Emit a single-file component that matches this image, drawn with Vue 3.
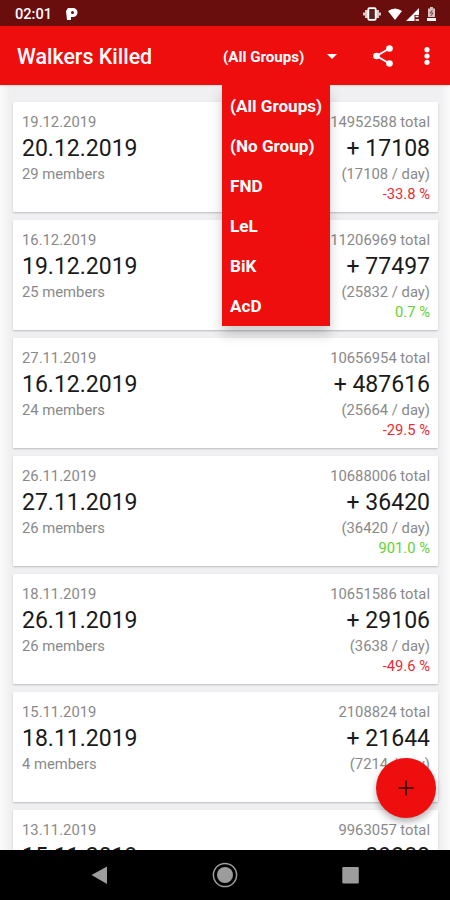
<template>
  <div class="screen">
    <header class="status-bar">
      <span class="clock">02:01</span>
      <svg class="p-icon" viewBox="0 0 12 14">
        <path d="M0 4 2 1h5a4.500 4.500 0 0 1 0 9H5v3H1Z" fill="#fff" />
        <circle cx="6.500" cy="5.500" r="1.500" fill="#690d0d" />
      </svg>
      <div class="status-icons">
        <svg class="vibrate" viewBox="0 0 18 14">
          <path d="M0 5.500h2V3h3v8H2V8.500H0ZM18 5.500h-2V3h-3v8h3V8.500h2Z" fill="#dcc6c6" />
          <rect x="5.300" y="1.200" width="7.400" height="11.600" rx="1" fill="#5c2020" stroke="#fff" stroke-width="1.800" />
        </svg>
        <svg class="wifi" viewBox="0 0 14 12">
          <path d="M0 3Q7-2 14 3L7 12Z" fill="#fff" />
        </svg>
        <svg class="signal" viewBox="0 0 14 13">
          <path d="M0 13 13 0v7H8.500v6Z" fill="#fff" />
          <path d="M9.500 8.500h3M9.500 12h3.500" stroke="#fff" stroke-width="1.600" />
        </svg>
        <svg class="battery" viewBox="0 0 9 14">
          <path d="M3 0h3v1.500h2V10H1V1.500h2Z" fill="#d9c0c0" />
          <path d="M5.500 3 3 6h3L3.700 9" fill="none" stroke="#754040" stroke-width="1" />
          <path d="M0 11h9v3H0Z" fill="#fff" />
        </svg>
      </div>
    </header>

    <div class="toolbar">
      <h1 class="title">Walkers Killed</h1>
      <div class="spinner">
        <span>{{ selected }}</span>
        <svg class="caret" viewBox="0 0 10 5"><path d="M0 0h10L5 5Z" fill="#fff" /></svg>
        <ul class="menu">
          <li v-for="group in groups" :key="group" @click="selected = group">{{ group }}</li>
        </ul>
      </div>
      <svg class="share" viewBox="0 0 20 22">
        <path d="M16.500 3.500 3.500 11l13 7.500" fill="none" stroke="#fff" stroke-width="2" />
        <circle cx="16.500" cy="3.500" r="3.300" fill="#fff" />
        <circle cx="3.500" cy="11" r="3.300" fill="#fff" />
        <circle cx="16.500" cy="18.500" r="3.300" fill="#fff" />
      </svg>
      <svg class="more" viewBox="0 0 6 18">
        <circle cx="3" cy="2.700" r="2.600" fill="#fff" />
        <circle cx="3" cy="9" r="2.600" fill="#fff" />
        <circle cx="3" cy="15.300" r="2.600" fill="#fff" />
      </svg>
    </div>

    <main class="list">
      <article v-for="item in entries" :key="item.to" class="card">
        <div class="col">
          <span class="small">{{ item.from }}</span>
          <span class="big">{{ item.to }}</span>
          <span class="small">{{ item.members }} members</span>
        </div>
        <div class="col right">
          <span class="small">{{ item.total }} total</span>
          <span class="big">+ {{ item.kills }}</span>
          <span class="small">({{ item.perDay }} / day)</span>
          <span v-if="item.change" :class="['change', item.change < 0 ? 'down' : 'up']">
            {{ item.change.toFixed(1) }} %
          </span>
        </div>
      </article>
    </main>

    <button class="fab" aria-label="Add">
      <svg viewBox="0 0 16 16"><path d="M8 .5v15M.5 8h15" stroke="#300" stroke-width="1.700" /></svg>
    </button>

    <nav class="nav-bar">
      <svg viewBox="0 0 26 26"><path d="M4.500 13 20 4.500v17.500Z" fill="#9c9c9c" /></svg>
      <svg viewBox="0 0 26 26">
        <circle cx="13" cy="13" r="11.600" fill="none" stroke="#9c9c9c" stroke-width="1.500" />
        <circle cx="13" cy="13" r="8" fill="#9c9c9c" />
      </svg>
      <svg viewBox="0 0 26 26"><rect x="5.300" y="5" width="16.500" height="16.500" rx="1" fill="#9c9c9c" /></svg>
    </nav>
  </div>
</template>

<script setup>
import { ref } from 'vue'

const selected = ref('(All Groups)')
const groups = ['(All Groups)', '(No Group)', 'FND', 'LeL', 'BiK', 'AcD']

const entries = [
  { from: '19.12.2019', to: '20.12.2019', members: 29, total: 14952588, kills: 17108, perDay: 17108, change: -33.8 },
  { from: '16.12.2019', to: '19.12.2019', members: 25, total: 11206969, kills: 77497, perDay: 25832, change: 0.7 },
  { from: '27.11.2019', to: '16.12.2019', members: 24, total: 10656954, kills: 487616, perDay: 25664, change: -29.5 },
  { from: '26.11.2019', to: '27.11.2019', members: 26, total: 10688006, kills: 36420, perDay: 36420, change: 901.0 },
  { from: '18.11.2019', to: '26.11.2019', members: 26, total: 10651586, kills: 29106, perDay: 3638, change: -49.6 },
  { from: '15.11.2019', to: '18.11.2019', members: 4, total: 2108824, kills: 21644, perDay: 7214 },
  { from: '13.11.2019', to: '15.11.2019', members: 26, total: 9963057, kills: 89380, perDay: 44690 }
]
</script>

<style>
body {
  margin: 0;
}
</style>

<style scoped>
.screen {
  position: relative;
  display: flex;
  flex-direction: column;
  width: 450px;
  height: 900px;
  overflow: hidden;
  font-family: Roboto, sans-serif;
}

.status-bar {
  flex: none;
  display: flex;
  align-items: center;
  box-sizing: border-box;
  height: 26px;
  padding: 2px 14px 0 15px;
  background: #690d0d;
  color: #fff;
}

.clock {
  width: 51px;
  font-size: 14.6px;
  font-weight: 500;
}

.p-icon {
  width: 12px;
  height: 14px;
}

.status-icons {
  display: flex;
  align-items: center;
  margin-left: auto;
}

.vibrate {
  width: 18px;
  height: 14px;
  margin-right: 7px;
}

.wifi {
  width: 14px;
  height: 12px;
  margin-right: 4px;
}

.signal {
  width: 14px;
  height: 13px;
  margin-right: 7px;
}

.battery {
  width: 9px;
  height: 14px;
}

.toolbar {
  position: relative;
  z-index: 2;
  flex: none;
  display: flex;
  align-items: center;
  box-sizing: border-box;
  height: 59px;
  padding: 0 20px 0 17px;
  background: #ef0e0e;
  color: #fff;
  box-shadow: 0 1px 2px rgba(0, 0, 0, 0.1);
}

.title {
  width: 206px;
  margin: 2px 0 0;
  font-size: 21.4px;
  font-weight: 500;
  white-space: nowrap;
}

.spinner {
  position: relative;
  display: flex;
  align-items: center;
  justify-content: space-between;
  width: 114px;
  margin-top: 2px;
  font-size: 15.1px;
  font-weight: 700;
  white-space: nowrap;
}

.caret {
  width: 10px;
  height: 5px;
}

.menu {
  position: absolute;
  top: 37px;
  left: -1px;
  box-sizing: border-box;
  width: 108px;
  height: 241px;
  margin: 0;
  padding: 1px 0 0 8px;
  list-style: none;
  background: #ef0e0e;
  box-shadow: 0 8px 12px rgba(0, 0, 0, 0.2);
  clip-path: inset(0 -20px -30px -20px);
  font-size: 17.1px;
}

.menu li {
  height: 40px;
  line-height: 40px;
}

.share {
  width: 20px;
  height: 22px;
  margin-left: 36px;
}

.more {
  width: 6px;
  height: 18px;
  margin-left: auto;
}

.list {
  flex: 1;
  display: flex;
  flex-direction: column;
  gap: 8px;
  min-height: 0;
  padding: 17px 12px 0 13px;
  overflow: hidden;
  background: linear-gradient(90deg, #fafafa, #f0f0f2 10px, #f0f0f2 440px, #fafafa);
}

.card {
  flex: none;
  display: flex;
  justify-content: space-between;
  box-sizing: border-box;
  height: 110px;
  padding: 9px 8px 0 9px;
  border-radius: 1px;
  background: #fff;
  box-shadow: 0 1px 2px rgba(0, 0, 0, 0.22);
}

.col {
  display: flex;
  flex-direction: column;
}

.right {
  align-items: flex-end;
}

.small {
  color: #898989;
  font-size: 14.8px;
  line-height: 22px;
}

.big {
  padding-top: 2px;
  color: #1a1a1a;
  font-size: 23px;
  line-height: 28px;
}

.change {
  font-size: 14.75px;
  line-height: 19px;
}

.down {
  color: #e92c35;
}

.up {
  color: #61d334;
}

.fab {
  position: absolute;
  top: 758px;
  left: 376px;
  z-index: 3;
  display: flex;
  align-items: center;
  justify-content: center;
  width: 60px;
  height: 60px;
  padding: 0;
  border: 0;
  border-radius: 50%;
  background: #ef0e0e;
  box-shadow: 0 4px 7px rgba(0, 0, 0, 0.3);
}

.fab svg {
  width: 16px;
  height: 16px;
}

.nav-bar {
  flex: none;
  display: flex;
  justify-content: space-between;
  box-sizing: border-box;
  height: 50px;
  padding: 12px 87px 0;
  background: #000;
}

.nav-bar svg {
  width: 26px;
  height: 26px;
}
</style>
